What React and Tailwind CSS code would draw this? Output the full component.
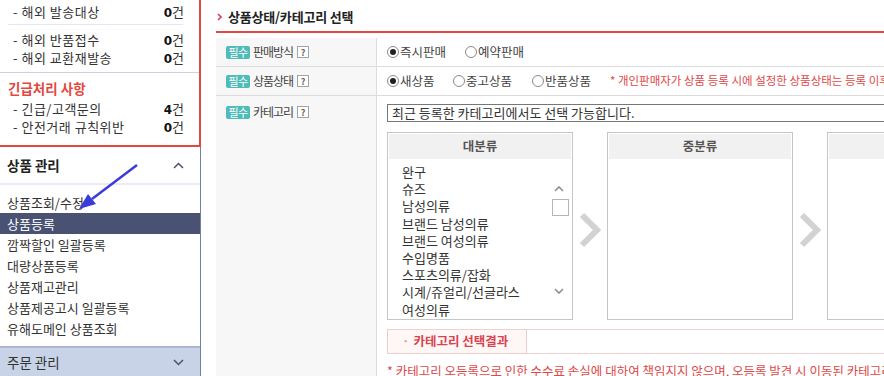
const font = "font-['Noto_Sans_CJK_KR','Noto_Sans',sans-serif]";

const CountRow = ({ label, n, className = "" }) => (
  <div className={`flex items-center justify-between pl-[13px] pr-[15px] ${className}`}>
    <span className="tracking-[0.5px]">{label}</span>
    <span>
      <b className="text-[#111] font-['DejaVu_Sans'] text-[12px]">{n}</b>
      <span>건</span>
    </span>
  </div>
);

const menu = [
  "상품조회/수정",
  "상품등록",
  "깜짝할인 일괄등록",
  "대량상품등록",
  "상품재고관리",
  "상품제공고시 일괄등록",
  "유해도메인 상품조회",
];

const categories = [
  "완구",
  "슈즈",
  "남성의류",
  "브랜드 남성의류",
  "브랜드 여성의류",
  "수입명품",
  "스포츠의류/잡화",
  "시계/쥬얼리/선글라스",
  "여성의류",
];

const Chevron = ({ up }) => (
  <svg width="11" height="7" viewBox="0 0 11 7" className="shrink-0">
    <polyline
      points={up ? "1,6 5.5,1.5 10,6" : "1,1 5.5,5.5 10,1"}
      fill="none"
      stroke="#4a5273"
      strokeWidth="1.5"
    />
  </svg>
);

const Help = () => (
  <span className="ml-[4px] flex h-[12px] w-[12px] items-center justify-center border border-[#a3a3a3] bg-white text-[9px] font-bold leading-none text-[#666]">
    ?
  </span>
);

const Label = ({ text }) => (
  <div className="flex h-[28px] items-center">
    <span className="h-[13px] w-[24px] rounded-[2px] bg-[#4fbcb9] text-center text-[11px] leading-[13px] text-white tracking-[-0.5px]">
      필수
    </span>
    <span className="ml-[3px] text-[12px] tracking-[-1px] text-[#444]">{text}</span>
    <Help />
  </div>
);

const Radio = ({ checked, label, w }) => (
  <span className={`flex shrink-0 items-center ${w}`}>
    <span className="flex h-[12px] w-[12px] items-center justify-center rounded-full border border-[#8a8a8a] bg-white">
      {checked && <span className="h-[6px] w-[6px] rounded-full bg-[#222]" />}
    </span>
    <span className="ml-[1px] text-[12.5px] text-[#444]">{label}</span>
  </span>
);

const BigArrow = () => (
  <div className="flex w-[34px] shrink-0 items-center justify-center pt-[8px]">
    <svg width="22" height="36" viewBox="0 0 22 36">
      <polyline points="3,3 18,18 3,33" fill="none" stroke="#d2d2d2" strokeWidth="6" />
    </svg>
  </div>
);

const CategoryBox = ({ title, items = [], scroll }) => (
  <div className="relative h-[188px] w-[186px] shrink-0 border border-[#c6c6c6] p-px">
    <div className="flex h-[25px] items-center justify-center bg-[#f1f1f1] text-[12.5px] font-bold text-[#555]">
      {title}
    </div>
    <div className="h-[159px] overflow-hidden pl-[13px] pt-[4px]">
      {items.map((c) => (
        <div key={c} className="whitespace-nowrap text-[13px] leading-[17.2px] text-[#333]">
          {c}
        </div>
      ))}
    </div>
    {scroll && (
      <>
        <svg width="10" height="6" viewBox="0 0 10 6" className="absolute left-[166px] top-[53px]">
          <polyline points="1,5 5,1 9,5" fill="none" stroke="#8d8d8d" strokeWidth="1.6" />
        </svg>
        <div className="absolute left-[164px] top-[66px] h-[17px] w-[17px] border border-[#b5b5b5] bg-white" />
        <svg width="10" height="6" viewBox="0 0 10 6" className="absolute left-[166px] top-[155px]">
          <polyline points="1,1 5,5 9,1" fill="none" stroke="#8d8d8d" strokeWidth="1.6" />
        </svg>
      </>
    )}
  </div>
);

export default function App() {
  return (
    <div className={`flex h-[376px] w-[884px] overflow-hidden bg-white ${font}`}>
      <aside className="relative flex w-[201px] shrink-0 flex-col text-[#333]">
        <div className="h-[147px] w-[201px] border-b-2 border-r-2 border-[#e2483f] text-[13px]">
          <CountRow label="- 해외 발송대상" n="0" className="h-[24px]" />
          <div className="ml-[8px] mr-[16px] h-px bg-[#e7e7ef]" />
          <CountRow label="- 해외 반품접수" n="0" className="mt-[6px] h-[18px]" />
          <CountRow label="- 해외 교환재발송" n="0" className="h-[18px]" />
          <div className="mt-[5px] h-px bg-[#cfd0de]" />
          <div className="mt-[6px] flex h-[18px] items-center pl-[8px] text-[13.5px] font-bold text-[#e2483f]">
            긴급처리 사항
          </div>
          <CountRow label="- 긴급/고객문의" n="4" className="mt-[3px] h-[18px]" />
          <CountRow label="- 안전거래 규칙위반" n="0" className="h-[18px]" />
        </div>

        <div className="flex flex-1 flex-col border-r border-[#76809e]">
          <div className="flex h-[36px] items-center justify-between pl-[7px] pr-[16px]">
            <span className="text-[13.5px] font-bold text-[#222]">상품 관리</span>
            <Chevron up />
          </div>
          <div className="h-[2px] bg-[#ebebf3]" />
          <ul className="pt-[7px] text-[13px]">
            {menu.map((m) => (
              <li
                key={m}
                className={`flex h-[21px] items-center pl-[7px] ${
                  m === "상품등록" ? "bg-[#4a5273] text-white" : "text-[#333]"
                }`}
              >
                {m}
              </li>
            ))}
          </ul>
          <div className="flex-1" />
          <div className="flex h-[30px] items-center justify-between border-t-2 border-[#aab6d2] bg-[#c9d3e8] pl-[7px] pr-[16px]">
            <span className="text-[13.5px] text-[#333]">주문 관리</span>
            <Chevron />
          </div>
        </div>

        <svg width="201" height="376" className="pointer-events-none absolute left-0 top-0">
          <line x1="137" y1="165" x2="92" y2="199" stroke="#3b3bd6" strokeWidth="2.5" />
          <polygon points="79,209 96,204 88,194" fill="#3b3bd6" />
        </svg>
      </aside>

      <main className="min-w-0 flex-1 pl-[15px]">
        <div className="flex h-[31px] items-center pt-[2px]">
          <svg width="5" height="8" viewBox="0 0 5 8" className="ml-[1px]">
            <polyline points="1,1 4,4 1,7" fill="none" stroke="#d8436a" strokeWidth="1.6" />
          </svg>
          <h2 className="ml-[6px] text-[13px] font-bold tracking-[-0.2px] text-[#222]">
            상품상태/카테고리 선택
          </h2>
        </div>
        <div className="h-[2px] bg-[#e2483f]" />

        <div className="mt-[5px] grid grid-cols-[161px_1fr]">
          <div className="h-[29px] border-b border-r border-[#dcdcdc] bg-[#f7f7f7] pl-[10px]">
            <Label text="판매방식" />
          </div>
          <div className="flex h-[29px] items-center border-b border-[#dcdcdc] pl-[10px]">
            <Radio checked label="즉시판매" w="w-[78px]" />
            <Radio label="예약판매" />
          </div>

          <div className="h-[29px] border-b border-r border-[#dcdcdc] bg-[#f7f7f7] pl-[10px]">
            <Label text="상품상태" />
          </div>
          <div className="flex h-[29px] items-center overflow-hidden whitespace-nowrap border-b border-[#dcdcdc] pl-[10px]">
            <Radio checked label="새상품" w="w-[66px]" />
            <Radio label="중고상품" w="w-[79px]" />
            <Radio label="반품상품" w="w-[78px]" />
            <span className="text-[11.5px] text-[#e04848]">
              * 개인판매자가 상품 등록 시에 설정한 상품상태는 등록 이후
            </span>
          </div>

          <div className="h-[290px] border-r border-[#dcdcdc] bg-[#f7f7f7] pl-[10px] pt-[2px]">
            <Label text="카테고리" />
          </div>
          <div className="overflow-hidden pl-[10px] pt-[8px]">
            <div className="flex h-[18px] w-[560px] items-center border border-[#777] pl-[4px] text-[13px] text-[#333]">
              최근 등록한 카테고리에서도 선택 가능합니다.
            </div>
            <div className="mt-[10px] flex">
              <CategoryBox title="대분류" items={categories} scroll />
              <BigArrow />
              <CategoryBox title="중분류" />
              <BigArrow />
              <CategoryBox title="" />
            </div>
            <div className="mt-[9px] flex h-[25px] w-[600px] border-b border-t border-[#f0cfcf]">
              <div className="flex w-[140px] items-center border-l border-r border-[#efcccc] bg-[#fff6f6] pl-[14px] text-[12.5px] font-bold text-[#d8434f]">
                <span className="mr-[4px] text-[#e8a0a0]">·</span>
                카테고리 선택결과
              </div>
            </div>
            <p className="mt-[10px] whitespace-nowrap text-[12.5px] leading-[14px] text-[#e04848]">
              * 카테고리 오등록으로 인한 수수료 손실에 대하여 책임지지 않으며, 오등록 발견 시 이동된 카테고리의 수수료를
            </p>
          </div>
        </div>
      </main>
    </div>
  );
}
